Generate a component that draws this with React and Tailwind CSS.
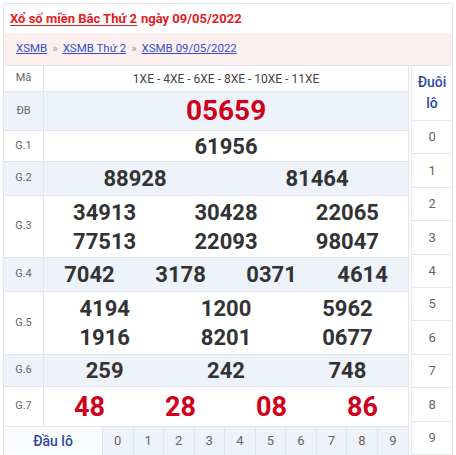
const rows = [
  { label: "G.1", bg: "bg-white", h: "h-[31px]", lines: [["61956"]] },
  { label: "G.2", bg: "bg-[#eef2fa]", h: "h-[34px]", lines: [["88928", "81464"]] },
  {
    label: "G.3",
    bg: "bg-white",
    h: "h-[62px]",
    lines: [
      ["34913", "30428", "22065"],
      ["77513", "22093", "98047"],
    ],
  },
  { label: "G.4", bg: "bg-[#eef2fa]", h: "h-[34px]", lines: [["7042", "3178", "0371", "4614"]] },
  {
    label: "G.5",
    bg: "bg-white",
    h: "h-[63px]",
    lines: [
      ["4194", "1200", "5962"],
      ["1916", "8201", "0677"],
    ],
  },
  { label: "G.6", bg: "bg-[#eef2fa]", h: "h-[32px]", lines: [["259", "242", "748"]] },
];

const cols = { 1: "grid-cols-1", 2: "grid-cols-2", 3: "grid-cols-3", 4: "grid-cols-4" };

function Label({ children }) {
  return (
    <div className="w-[40px] shrink-0 flex items-center justify-center border-r border-[#e3e6ea] text-[11px] text-[#666]">
      {children}
    </div>
  );
}

export default function App() {
  return (
    <div className="w-[456px] h-[455px] bg-white pt-[3px] px-[3px] overflow-hidden" style={{ fontFamily: "Roboto, Arial, sans-serif" }}>
      <div className="border border-[#e3e6ea] border-b-0 h-full flex flex-col">
        <div className="h-[29px] flex items-center pl-[6px] text-[13px] font-bold text-[#e0201f]">
          <span className="underline underline-offset-2">Xổ số miền Bắc Thứ 2</span>
          <span className="ml-[4px]">ngày 09/05/2022</span>
        </div>
        <div className="h-[32px] bg-[#fcefef] flex items-center pl-[12px] text-[11.5px] gap-[5px]">
          <span className="text-[#3450c4] underline">XSMB</span>
          <span className="text-[#999]">»</span>
          <span className="text-[#3450c4] underline">XSMB Thứ 2</span>
          <span className="text-[#999]">»</span>
          <span className="text-[#3450c4] underline">XSMB 09/05/2022</span>
        </div>
        <div className="flex flex-1 border-t border-[#e3e6ea]">
          <div className="w-[406px] border-r border-[#e3e6ea] flex flex-col">
            <div className="h-[26px] flex border-b border-[#e3e6ea]">
              <Label>Mã</Label>
              <div className="flex-1 flex items-center justify-center text-[12px] text-[#444]">
                1XE - 4XE - 6XE - 8XE - 10XE - 11XE
              </div>
            </div>
            <div className="h-[39px] flex bg-[#eef2fa] border-b border-[#e3e6ea]">
              <Label>ĐB</Label>
              <div className="flex-1 flex items-center justify-center text-[28px] font-bold text-[#d0021b]">
                05659
              </div>
            </div>
            {rows.map((r) => (
              <div key={r.label} className={`${r.h} ${r.bg} flex border-b border-[#e3e6ea]`}>
                <Label>{r.label}</Label>
                <div className="flex-1 flex flex-col justify-center">
                  {r.lines.map((line, i) => (
                    <div key={i} className={`grid ${cols[line.length]} text-[22px] leading-[29px] font-bold text-[#333]`}>
                      {line.map((n) => (
                        <div key={n} className="text-center">
                          {n}
                        </div>
                      ))}
                    </div>
                  ))}
                </div>
              </div>
            ))}
            <div className="h-[40px] flex bg-white border-b border-[#e3e6ea]">
              <Label>G.7</Label>
              <div className="flex-1 grid grid-cols-4 items-center text-[27px] font-bold text-[#d0021b]">
                {["48", "28", "08", "86"].map((n) => (
                  <div key={n} className="text-center">
                    {n}
                  </div>
                ))}
              </div>
            </div>
            <div className="flex-1 flex">
              <div className="w-[99px] flex items-center justify-center border-r border-[#e3e6ea] text-[14px] font-medium text-[#2c4a9e] bg-[#fafbfd]">
                Đầu lô
              </div>
              <div className="flex-1 grid grid-cols-10 bg-[#eef2fa]">
                {[0, 1, 2, 3, 4, 5, 6, 7, 8, 9].map((d) => (
                  <div key={d} className="flex items-center justify-center border-r border-[#e3e6ea] last:border-r-0 text-[13px] text-[#666]">
                    {d}
                  </div>
                ))}
              </div>
            </div>
          </div>
          <div className="w-[2px]" />
          <div className="w-[41px] border-l border-[#e3e6ea] flex flex-col">
            <div className="h-[55px] flex flex-col items-center justify-center text-[14px] leading-[21px] font-medium text-[#2c4a9e] border-b border-[#e3e6ea]">
              <span>Đuôi</span>
              <span>lô</span>
            </div>
            {[0, 1, 2, 3, 4, 5, 6, 7, 8, 9].map((d) => (
              <div key={d} className="h-[33.4px] shrink-0 flex items-center justify-center border-b border-[#e3e6ea] text-[13px] text-[#666]">
                {d}
              </div>
            ))}
          </div>
        </div>
      </div>
    </div>
  );
}
